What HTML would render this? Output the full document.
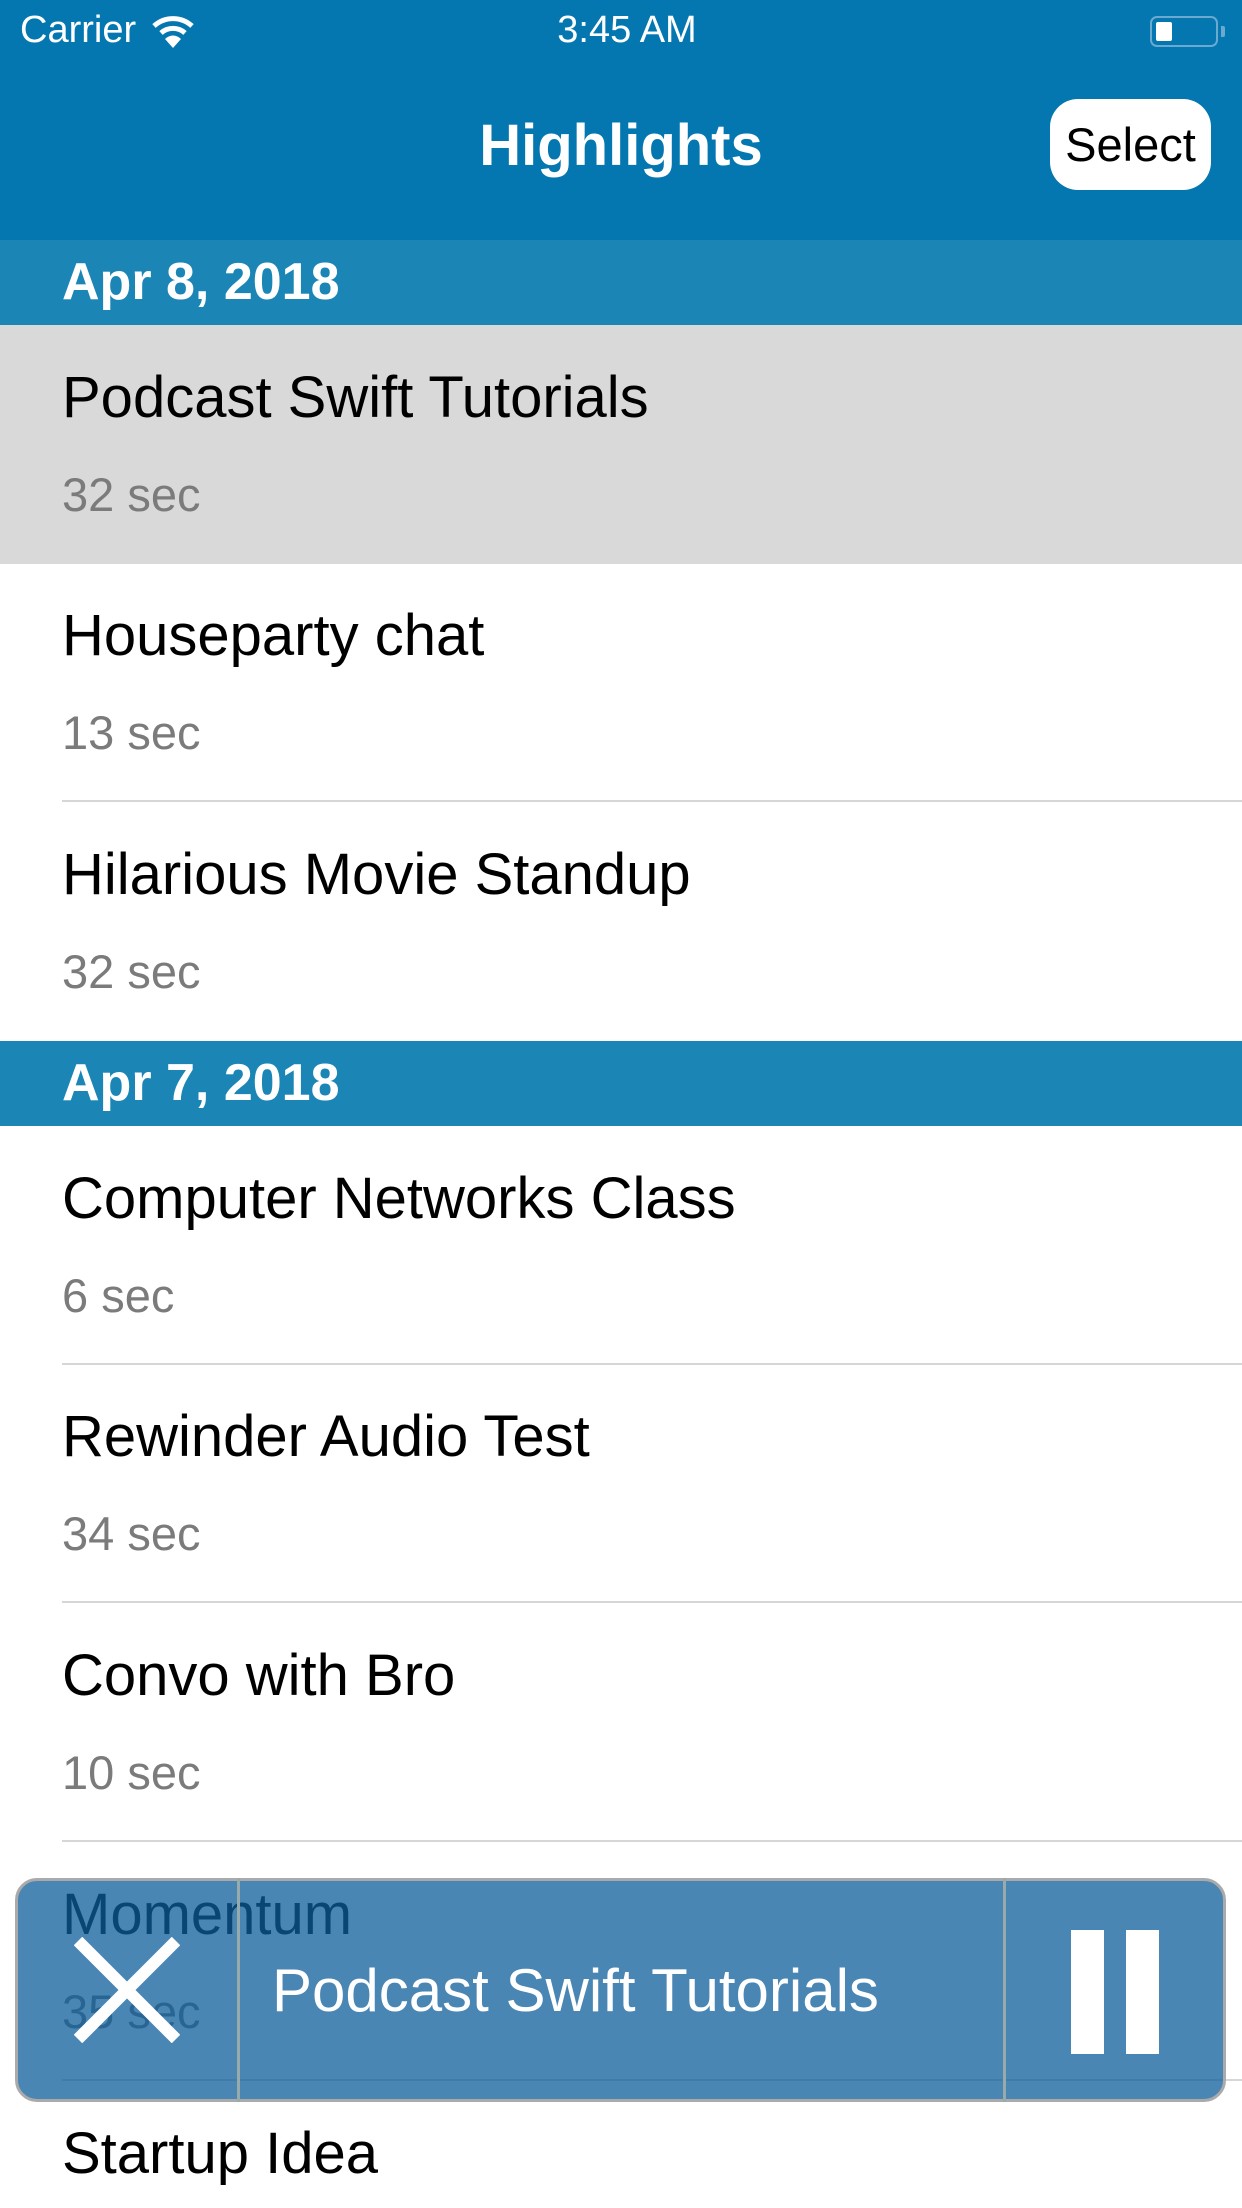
<!DOCTYPE html>
<html style="overflow:hidden;height:2208px"><head><meta charset="utf-8"><style>
*{margin:0;padding:0;box-sizing:border-box}
html,body{width:1242px;height:2208px;overflow:hidden}
body{background:#fff;font-family:"Liberation Sans",sans-serif}
#w{position:relative;width:1242px;height:2208px;overflow:hidden}
.abs{position:absolute}
.nav{left:0;top:0;width:1242px;height:240px;background:#0477b0}
.sec{left:0;width:1242px;height:85px;background:#1b86b6;color:#fff;font-weight:bold;font-size:52px;padding-left:62px;line-height:85px}
.row{left:0;width:1242px;height:239px}
.t{position:absolute;left:62px;top:44px;font-size:58px;color:#000;line-height:1}
.s{position:absolute;left:62px;top:146px;font-size:47px;color:#7b7b7b;line-height:1}
.sep{position:absolute;left:62px;right:0;bottom:0;height:2px;background:#d6d6d6}
</style></head><body><div id="w">
<div class="abs nav"></div>
<div class="abs" style="left:20px;top:9px;color:#fff;font-size:38px">Carrier</div>
<svg class="abs" style="left:150px;top:14px" width="46" height="36" viewBox="0 0 46 36"><path d="M4 12 A28 28 0 0 1 42 12" stroke="#fff" stroke-width="5" fill="none"/><path d="M11 19 A18 18 0 0 1 35 19" stroke="#fff" stroke-width="5" fill="none"/><path d="M23 34 L15 25 A11 11 0 0 1 31 25 Z" fill="#fff"/></svg>
<div class="abs" style="left:0;width:1254px;text-align:center;top:9px;color:#fff;font-size:38px">3:45 AM</div>
<div class="abs" style="left:1150px;top:16px;width:68px;height:31px;border:2px solid #6aaad0;border-radius:7px"></div>
<div class="abs" style="left:1156px;top:22px;width:16px;height:19px;background:#fff;border-radius:2px"></div>
<div class="abs" style="left:1221px;top:26px;width:4px;height:11px;background:#6aaad0;border-radius:0 2px 2px 0"></div>
<div class="abs" style="left:0;width:1242px;text-align:center;top:112px;color:#fff;font-weight:bold;font-size:58px">Highlights</div>
<div class="abs" style="left:1050px;top:99px;width:161px;height:91px;background:#fff;border-radius:28px;text-align:center;line-height:91px;font-size:47px;color:#000">Select</div>

<div class="abs sec" style="top:240px">Apr 8, 2018</div>
<div class="abs row" style="top:325px;background:#d9d9d9"><div class="t">Podcast Swift Tutorials</div><div class="s">32 sec</div></div>
<div class="abs row" style="top:563px"><div class="t">Houseparty chat</div><div class="s">13 sec</div><div class="sep"></div></div>
<div class="abs row" style="top:802px"><div class="t">Hilarious Movie Standup</div><div class="s">32 sec</div></div>
<div class="abs sec" style="top:1041px">Apr 7, 2018</div>
<div class="abs row" style="top:1126px"><div class="t">Computer Networks Class</div><div class="s">6 sec</div><div class="sep"></div></div>
<div class="abs row" style="top:1364px"><div class="t">Rewinder Audio Test</div><div class="s">34 sec</div><div class="sep"></div></div>
<div class="abs row" style="top:1603px"><div class="t">Convo with Bro</div><div class="s">10 sec</div><div class="sep"></div></div>
<div class="abs row" style="top:1842px"><div class="t">Momentum</div><div class="s">35 sec</div><div class="sep"></div></div>
<div class="abs row" style="top:2081px;height:127px;overflow:hidden"><div class="t">Startup Idea</div></div>

<div class="abs" style="left:15px;top:1878px;width:1211px;height:224px;background:rgba(14,94,155,0.75);border:3px solid #aaa;border-radius:22px"></div>
<div class="abs" style="left:237px;top:1878px;width:3px;height:224px;background:#9aa"></div>
<div class="abs" style="left:1003px;top:1878px;width:3px;height:224px;background:#9aa"></div>
<svg class="abs" style="left:74px;top:1937px" width="106" height="106" viewBox="0 0 106 106"><path d="M4 4 L102 102 M102 4 L4 102" stroke="#fff" stroke-width="12"/></svg>
<div class="abs" style="left:272px;top:1961px;color:#fff;font-size:60px;line-height:1">Podcast Swift Tutorials</div>
<div class="abs" style="left:1071px;top:1930px;width:33px;height:124px;background:#fff"></div>
<div class="abs" style="left:1126px;top:1930px;width:33px;height:124px;background:#fff"></div>
</div></body></html>
